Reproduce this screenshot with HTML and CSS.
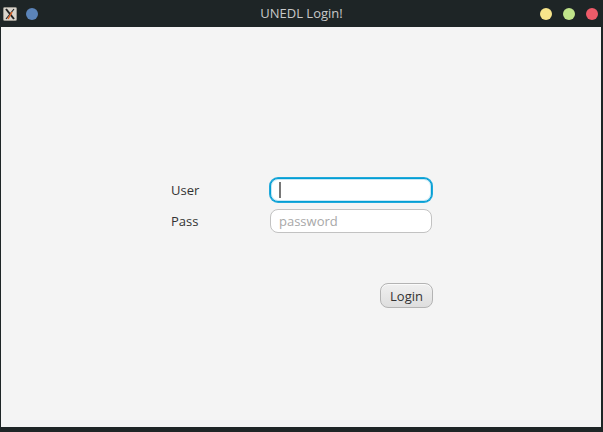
FILE: index.html
```html
<!DOCTYPE html>
<html>
<head>
<meta charset="utf-8">
<link rel="stylesheet" href="styles.css">
</head>
<body>
<div class="window">
  <div class="titlebar">
    <div class="tb-left">
      <svg class="app-icon" width="14" height="14" viewBox="0 0 14 14">
        <rect x="0.5" y="0.5" width="13" height="13" rx="1" fill="#d8d4cc" stroke="#9a968e"/>
        <path d="M3 2 L11 12" stroke="#222" stroke-width="2"/>
        <path d="M11 2 L3 12" stroke="#222" stroke-width="1.2"/>
        <path d="M5 12 L9 5" stroke="#e0652a" stroke-width="1.5"/>
      </svg>
      <span class="dot dot-blue"></span>
    </div>
    <div class="title">UNEDL Login!</div>
    <div class="tb-right">
      <span class="dot dot-yellow"></span>
      <span class="dot dot-green"></span>
      <span class="dot dot-red"></span>
    </div>
  </div>
  <div class="content">
    <div class="form">
      <label class="label">User</label>
      <div class="field field-focused"><span class="caret"></span></div>
      <label class="label">Pass</label>
      <div class="field"><span class="placeholder">password</span></div>
      <div class="actions">
        <button class="btn">Login</button>
      </div>
    </div>
  </div>
</div>
</body>
</html>
```

FILE: styles.css
```css
* { box-sizing: border-box; }
html, body {
  margin: 0;
  padding: 0;
  width: 603px;
  height: 432px;
  overflow: hidden;
  background: #1e2526;
  font-family: "Open Sans", "Noto Sans", sans-serif;
}
.window {
  display: flex;
  flex-direction: column;
  width: 603px;
  height: 432px;
}
.titlebar {
  height: 27px;
  flex: none;
  display: flex;
  align-items: center;
  justify-content: space-between;
  background: #1e2526;
  position: relative;
}
.tb-left {
  display: flex;
  align-items: center;
  padding-left: 3px;
  gap: 9px;
  padding-top: 1px;
}
.app-icon { display: block; }
.tb-right {
  display: flex;
  align-items: center;
  gap: 11px;
  padding-right: 5px;
  padding-top: 1px;
}
.dot {
  width: 12px;
  height: 12px;
  border-radius: 50%;
  display: block;
}
.dot-blue { background: #5b84b9; }
.dot-yellow { background: #f7e58b; }
.dot-green { background: #c0e48a; }
.dot-red { background: #ee5b69; }
.title {
  position: absolute;
  left: 0;
  right: 0;
  top: 5px;
  text-align: center;
  color: #c8c9c9;
  font-size: 13px;
  line-height: 16px;
  pointer-events: none;
}
.content {
  flex: 1;
  background: #f4f4f4;
  margin: 0 2px 5px 1px;
  padding: 151px 0 0 169px;
}
.form {
  display: grid;
  grid-template-columns: 100px 162px;
  grid-auto-rows: auto;
  row-gap: 7px;
  align-items: center;
}
.label {
  font-size: 13px;
  color: #333;
  padding-left: 1px;
}
.field {
  height: 24px;
  border: 1px solid #c2c2c2;
  border-radius: 8px;
  background: #fff;
  display: flex;
  align-items: center;
  padding-left: 8px;
  position: relative;
}
.field-focused {
  border: 1px solid #039ed3;
  box-shadow: 0 0 0 1px #20a9db, inset 0 0 0 1px #c6e8f5;
}
.caret {
  width: 2px;
  height: 16px;
  background: #777;
  margin-left: 0;
}
.placeholder {
  font-size: 13px;
  color: #a8a8a8;
}
.actions {
  grid-column: 1 / 3;
  display: flex;
  justify-content: flex-end;
  margin-top: 43px;
  margin-right: -1px;
}
.btn {
  font-family: inherit;
  font-size: 13px;
  color: #333;
  width: 53px;
  height: 25px;
  padding: 0;
  border: 1px solid #b3b3b3;
  border-radius: 8px;
  background: linear-gradient(#f0f0f0, #dedede);
  box-shadow: inset 0 1px 0 #fafafa;
}
```
